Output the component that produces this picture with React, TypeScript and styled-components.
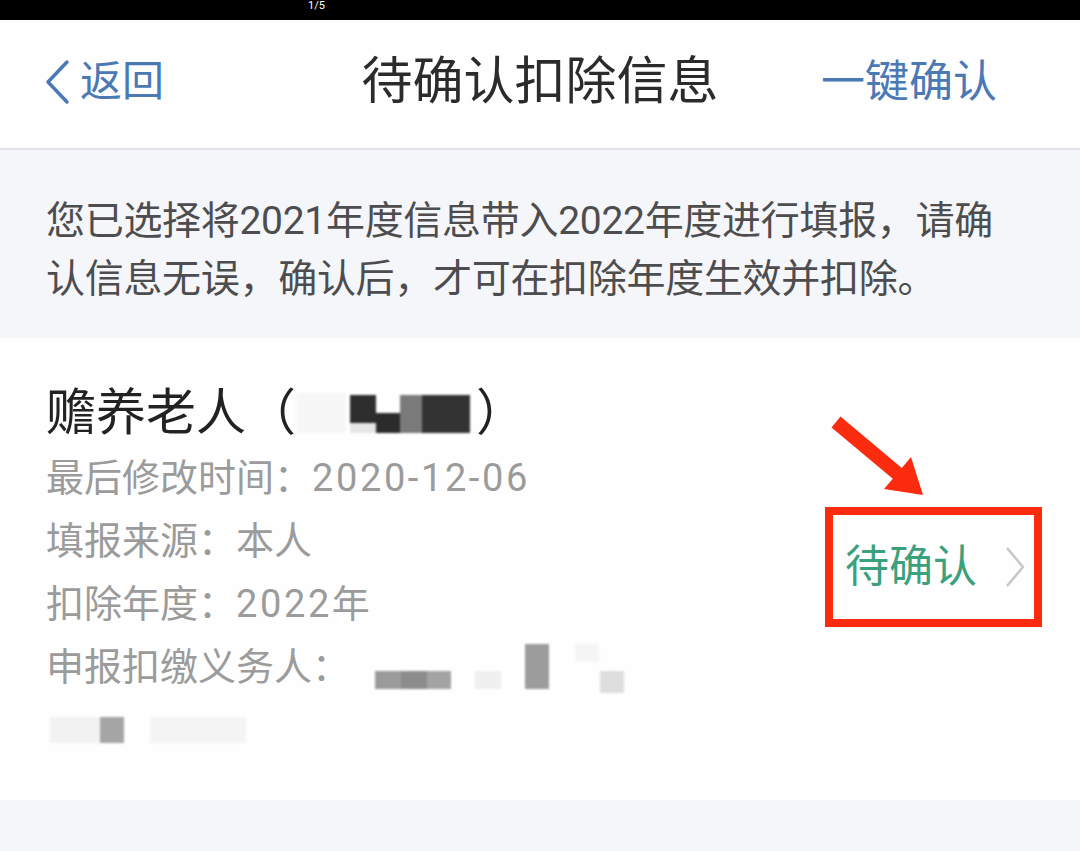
import React from "react";
import styled, { createGlobalStyle } from "styled-components";

const Global = createGlobalStyle`
  html, body { margin: 0; padding: 0; background: #f5f6f9; }
  body { font-family: Roboto, "Noto Sans CJK SC", sans-serif; }
  * { box-sizing: border-box; }
`;

const Page = styled.div`
  width: 1080px;
  height: 851px;
  overflow: hidden;
  background: #f5f6f9;
  display: flex;
  flex-direction: column;
`;

const StatusBar = styled.div`
  height: 20px;
  background: #000;
  color: #fff;
  font-size: 11px;
  line-height: 11px;
  padding-left: 308px;
`;

const Header = styled.header`
  height: 130px;
  background: #fefefe;
  border-bottom: 2px solid #e2e3e6;
  display: grid;
  grid-template-columns: 1fr auto 1fr;
  align-items: center;
  padding: 0 44px 4px 44px;
`;

const Back = styled.div`
  display: flex;
  align-items: center;
  gap: 10px;
  color: #4b79b6;
  font-size: 42px;
  line-height: 50px;
`;

const Title = styled.h1`
  margin: 0;
  font-weight: 400;
  font-size: 51px;
  color: #2b2b2b;
  line-height: 60px;
`;

const Action = styled.div`
  justify-self: end;
  padding-right: 39px;
  color: #4b79b6;
  font-size: 44px;
  line-height: 50px;
`;

const Notice = styled.p`
  margin: 0;
  height: 188px;
  padding: 42px 70px 0 46px;
  font-size: 39px;
  line-height: 58px;
  color: #4d4d4f;
  letter-spacing: -0.3px;
`;

const Card = styled.section`
  position: relative;
  background: #fefefe;
  height: 462px;
  display: flex;
  align-items: center;
  justify-content: space-between;
  padding: 0 38px 0 46px;
`;

const Info = styled.div`
  display: flex;
  flex-direction: column;
  padding-top: 6px;
`;

const ItemTitle = styled.div`
  display: flex;
  align-items: center;
  font-size: 50px;
  line-height: 60px;
  color: #222;
  margin-bottom: 4px;
`;

const Line = styled.div`
  display: flex;
  align-items: center;
  font-size: 38px;
  line-height: 63px;
  height: 63px;
  color: #9b9b9b;
`;

const Value = styled.span`
  letter-spacing: 2.6px;
`;

const Mosaic = styled.div<{ $w: number; $h: number; $ml?: number }>`
  position: relative;
  width: ${(p) => p.$w}px;
  height: ${(p) => p.$h}px;
  margin-left: ${(p) => p.$ml ?? 0}px;
  filter: blur(1px);
`;

const Cell = styled.span<{ $c: string }>`
  position: absolute;
  background: ${(p) => p.$c};
`;

const Status = styled.div`
  display: flex;
  align-items: center;
  gap: 27px;
  border: 8px solid #fb2b10;
  padding: 22px 8px 22px 12px;
  color: #3ba17c;
  font-size: 44px;
  line-height: 60px;
  margin-top: -4px;
`;

const Arrow = styled.svg`
  position: absolute;
  left: 826px;
  top: 70px;
`;

const Footer = styled.div`
  flex: 1;
  background: #f5f6f9;
`;

type C = { x: number; y: number; w: number; h: number; c: string };
const Blocks = ({ cells, w, h, ml }: { cells: C[]; w: number; h: number; ml?: number }) => (
  <Mosaic $w={w} $h={h} $ml={ml}>
    {cells.map((b, i) => (
      <Cell key={i} $c={b.c} style={{ left: b.x, top: b.y, width: b.w, height: b.h }} />
    ))}
  </Mosaic>
);

export default function App() {
  return (
    <>
      <Global />
      <Page>
        <StatusBar>1/5</StatusBar>
        <Header>
          <Back>
            <svg width="26" height="46" viewBox="0 0 26 46">
              <polyline points="23,3 4,23 23,43" fill="none" stroke="#4b79b6" strokeWidth="3.5" strokeLinecap="round" strokeLinejoin="round" />
            </svg>
            <span>返回</span>
          </Back>
          <Title>待确认扣除信息</Title>
          <Action>一键确认</Action>
        </Header>
        <Notice>
          您已选择将2021年度信息带入2022年度进行填报，请确认信息无误，确认后，才可在扣除年度生效并扣除。
        </Notice>
        <Card>
          <Info>
            <ItemTitle>
              赡养老人（
              <Blocks
                w={180}
                h={48}
                ml={0}
                cells={[
                  { x: 0, y: 4, w: 50, h: 40, c: "#f7f7f7" },
                  { x: 54, y: 6, w: 26, h: 28, c: "#2e2e2e" },
                  { x: 80, y: 24, w: 24, h: 20, c: "#2b2b2b" },
                  { x: 104, y: 6, w: 22, h: 38, c: "#7a7a7a" },
                  { x: 126, y: 6, w: 48, h: 38, c: "#333" },
                  { x: 54, y: 34, w: 26, h: 10, c: "#e6e6e6" },
                ]}
              />
              ）
            </ItemTitle>
            <Line>
              最后修改时间：<Value>2020-12-06</Value>
            </Line>
            <Line>填报来源：本人</Line>
            <Line>
              扣除年度：<Value>2022</Value>年
            </Line>
            <Line>
              申报扣缴义务人：
              <Blocks
                w={260}
                h={50}
                ml={25}
                cells={[
                  { x: 0, y: 29, w: 26, h: 18, c: "#9a9a9a" },
                  { x: 26, y: 29, w: 26, h: 18, c: "#8c8c8c" },
                  { x: 52, y: 29, w: 24, h: 18, c: "#a3a3a3" },
                  { x: 100, y: 29, w: 26, h: 18, c: "#f0f0f0" },
                  { x: 150, y: 2, w: 24, h: 45, c: "#9c9c9c" },
                  { x: 200, y: 2, w: 24, h: 18, c: "#f5f5f5" },
                  { x: 225, y: 29, w: 24, h: 22, c: "#dedede" },
                ]}
              />
            </Line>
            <Line>
              <Blocks
                w={200}
                h={30}
                ml={4}
                cells={[
                  { x: 0, y: 2, w: 50, h: 26, c: "#f2f2f2" },
                  { x: 50, y: 2, w: 24, h: 26, c: "#a5a5a5" },
                  { x: 100, y: 2, w: 96, h: 26, c: "#f4f4f4" },
                ]}
              />
            </Line>
          </Info>
          <Status>
            <span>待确认</span>
            <svg width="22" height="44" viewBox="0 0 22 44">
              <polyline points="3,3 19,22 3,41" fill="none" stroke="#c8c8c8" strokeWidth="2.5" strokeLinejoin="round" />
            </svg>
          </Status>
          <Arrow width="110" height="95" viewBox="0 0 110 95">
            <polygon
              points="14.5,8.6 75.8,60 85,49 97,87 58,81 66.8,70.8 5.5,19.4"
              fill="#fb2b10"
            />
          </Arrow>
        </Card>
        <Footer />
      </Page>
    </>
  );
}
